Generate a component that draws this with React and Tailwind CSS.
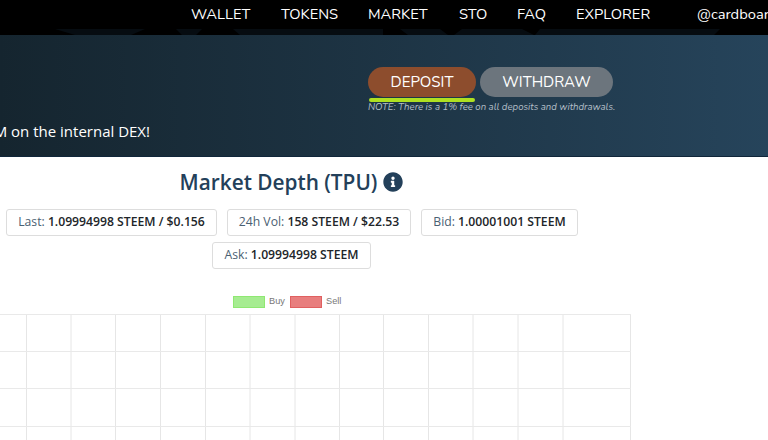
const navItems = [
  ["WALLET", "w-[90px]"],
  ["TOKENS", "w-[87px]"],
  ["MARKET", "w-[91px]"],
  ["STO", "w-[58px]"],
  ["FAQ", "w-[59px]"],
  ["EXPLORER", "w-[121px]"],
];

const vLines = [26.5, 71, 115.5, 160.5, 205.5, 250, 295, 339.5, 383.5, 428.5, 473, 518, 563, 630.5];
const hLines = [314.5, 351.5, 388.5, 426.5];

function Stat({ label, value, className = "" }) {
  return (
    <div className={`h-[27px] flex items-center justify-center rounded-[3px] border border-[#dddddd] bg-white text-[12.2px] text-[#4a6072] whitespace-nowrap ${className}`}>
      <span>{label}:&nbsp;</span>
      <span className="font-semibold text-[#212529]">{value}</span>
    </div>
  );
}

export default function App() {
  return (
    <div className="w-[768px] h-[440px] overflow-hidden bg-white flex flex-col font-['Open_Sans',sans-serif]">
      <header className="relative h-[35px] shrink-0 bg-black flex items-start pt-[3px] pl-[191px] text-white text-[14.7px] font-['Nunito','Lato',sans-serif] whitespace-nowrap">
        <svg className="absolute left-0 bottom-0" width="768" height="6" viewBox="0 0 768 6" fill="#060c11" aria-hidden="true">
          <path d="M55 0h90l-14 6H75zM176 0h26l-6 6h-14zM233 0h150v6H240zM400 0h40l8 6h-40zM462 0h60l12 6h-80zM540 0h180l-6 6H535z" />
        </svg>
        {navItems.map(([n, w]) => (
          <div key={n} className={`relative shrink-0 ${w}`}>{n}</div>
        ))}
        <div className="relative shrink-0">@cardboard</div>
      </header>

      <section className="h-[122px] shrink-0 flex bg-gradient-to-r from-[#15252f] to-[#26445b] border-b border-[#10263a]">
        <div className="w-[150px] h-full flex justify-end items-end pb-[14px] shrink-0">
          <span className="text-white text-[15px] whitespace-nowrap">Buy TPU with STEEM on the internal DEX!</span>
        </div>
        <div className="ml-[218px] pt-[32px] flex flex-col">
          <div className="flex gap-[4px] font-['Nunito','Lato',sans-serif] text-white text-[15px]">
            <div className="relative w-[108px] h-[30px] rounded-[15px] bg-[#8d4d2d] flex items-center justify-center">
              DEPOSIT
              <div className="absolute left-[1px] right-[1px] -bottom-[5px] h-[4px] rounded-sm bg-[#aee021]" />
            </div>
            <div className="w-[133px] h-[30px] rounded-[15px] bg-[#6c757d] flex items-center justify-center">WITHDRAW</div>
          </div>
          <div className="mt-[3px] text-[9.6px] italic text-[#b4bfc8] font-['Nunito','Lato',sans-serif] whitespace-nowrap">
            NOTE: There is a 1% fee on all deposits and withdrawals.
          </div>
        </div>
      </section>

      <main className="flex flex-col">
        <div className="h-[52px] w-[583px] flex items-center justify-center gap-[6px] text-[#23405a] text-[20.8px] font-[550]">
          <span>Market Depth (TPU)</span>
          <svg className="mb-[3px]" width="20" height="20" viewBox="0 0 512 512" fill="#23405a" aria-hidden="true">
            <path d="M256 8C119 8 8 119 8 256s111 248 248 248 248-111 248-248S393 8 256 8zm0 110c23.200 0 42 18.800 42 42s-18.800 42-42 42-42-18.800-42-42 18.800-42 42-42zm56 254c0 6.600-5.400 12-12 12h-88c-6.600 0-12-5.400-12-12v-24c0-6.600 5.400-12 12-12h12v-64h-12c-6.600 0-12-5.400-12-12v-24c0-6.600 5.400-12 12-12h64c6.600 0 12 5.400 12 12v100h12c6.600 0 12 5.400 12 12v24z" />
          </svg>
        </div>
        <div className="flex gap-[10px] pl-[6px]">
          <Stat label="Last" value="1.09994998 STEEM / $0.156" className="w-[211px]" />
          <Stat label="24h Vol" value="158 STEEM / $22.53" className="w-[184px]" />
          <Stat label="Bid" value="1.00001001 STEEM" className="w-[157px]" />
        </div>
        <div className="flex pl-[212px] mt-[6px]">
          <Stat label="Ask" value="1.09994998 STEEM" className="w-[159px]" />
        </div>
        <div className="flex items-center pl-[233px] mt-[26px] h-[13px] text-[9.2px] text-[#777777] font-['Liberation_Sans',sans-serif]">
          <div className="w-[32px] h-[12px] bg-[#a6ec91] border border-[#8fe872]" />
          <span className="ml-[4px] w-[21px]">Buy</span>
          <div className="w-[32px] h-[12px] bg-[#e87e7e] border border-[#e06060]" />
          <span className="ml-[4px]">Sell</span>
        </div>
        <svg width="768" height="126" viewBox="0 314 768 126" className="mt-[6px] block" aria-hidden="true">
          {vLines.map((x) => (
            <line key={x} x1={x} x2={x} y1="314" y2="440" stroke="#e6e6e6" strokeWidth="1" />
          ))}
          {hLines.map((y) => (
            <line key={y} x1="0" x2="631" y1={y} y2={y} stroke="#e9e9e9" strokeWidth="1" />
          ))}
        </svg>
      </main>
    </div>
  );
}
